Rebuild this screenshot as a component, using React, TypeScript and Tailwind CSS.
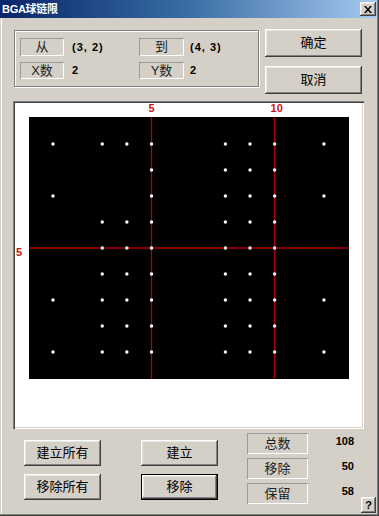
import React from "react";

const btn =
  "flex items-center justify-center bg-[#d4d0c8] text-black shadow-[inset_-1px_-1px_#404040,inset_1px_1px_#ffffff,inset_-2px_-2px_#808080,inset_2px_2px_#e8e6e0]";
const stat =
  "flex items-center justify-center bg-[#d4d0c8] text-[#222] shadow-[inset_1px_1px_#9a9a9a,inset_-1px_-1px_#ffffff]";

const font = { fontFamily: '"Liberation Sans", "Noto Sans CJK SC", sans-serif' };

const COLS = 12;
const ROWS = 9;
const x0 = 38;
const dx = 24.63;
const y0 = 41;
const dy = 26;

// which column indices (1-based) are present in each row
const rows: number[][] = [
  [1, 3, 4, 5, 8, 9, 10, 12],
  [5, 8, 9, 10],
  [1, 5, 8, 9, 10, 12],
  [3, 4, 5, 8, 9, 10],
  [3, 4, 5, 8, 9, 10],
  [3, 4, 5, 8, 9, 10],
  [1, 3, 4, 5, 8, 9, 10, 12],
  [3, 4, 5, 8, 9, 10],
  [1, 3, 4, 5, 8, 9, 10, 12],
];

function Board() {
  const cx = (c: number) => x0 + (c - 1) * dx;
  const cy = (r: number) => y0 + (r - 1) * dy;
  return (
    <svg width="347" height="324" className="block">
      <rect x="0" y="0" width="347" height="324" fill="#ffffff" />
      <rect x="14" y="14" width="320" height="262" fill="#000000" />
      <line x1={cx(5)} y1="14" x2={cx(5)} y2="276" stroke="#b00000" strokeWidth="1.3" />
      <line x1={cx(10)} y1="14" x2={cx(10)} y2="276" stroke="#b00000" strokeWidth="1.3" />
      <line x1="14" y1={cy(5)} x2="334" y2={cy(5)} stroke="#b00000" strokeWidth="1.3" />
      {rows.map((cols, ri) =>
        cols.map((c) => (
          <circle key={`${ri}-${c}`} cx={cx(c)} cy={cy(ri + 1)} r="1.7" fill="#ffffff" />
        ))
      )}
      <text x={cx(5)} y="9" textAnchor="middle" fill="#d01010" fontSize="11" fontWeight="bold" fontFamily="Liberation Sans, sans-serif">5</text>
      <text x={cx(10) + 2} y="9" textAnchor="middle" fill="#d01010" fontSize="11" fontWeight="bold" fontFamily="Liberation Sans, sans-serif">10</text>
      <text x="1" y={cy(5) + 8} textAnchor="start" fill="#d01010" fontSize="11" fontWeight="bold" fontFamily="Liberation Sans, sans-serif">5</text>
    </svg>
  );
}

export default function App() {
  void COLS;
  void ROWS;
  return (
    <div
      style={font}
      className="relative flex flex-col w-[379px] h-[516px] bg-[#d4d0c8] text-[13px] shadow-[inset_-1px_-1px_#404040,inset_-2px_-2px_#808080,inset_1px_1px_#d4d0c8,inset_2px_2px_#ffffff]"
    >
      {/* title bar */}
      <div className="flex items-center h-[18px] mr-[2px] bg-gradient-to-r from-[#0a246a] via-[#3a6ea5] to-[#a6caf0]">
        <span className="pl-[2px] text-white text-[11px] font-bold leading-none tracking-[-0.3px]">BGA球链限</span>
        <div className={`${btn} ml-auto mr-[1px] w-[16px] h-[14px]`}>
          <svg width="8" height="7" viewBox="0 0 8 7">
            <path d="M0 0h2l2 2.5L6 0h2L5 3.5 8 7H6L4 4.5 2 7H0l3-3.5z" fill="#000" />
          </svg>
        </div>
      </div>

      {/* top row */}
      <div className="flex pl-[14px] pt-[11px]">
        <div className="mt-[1px] w-[245px] h-[57px] border border-[#808080] shadow-[1px_1px_#ffffff,inset_1px_1px_#ffffff] flex flex-col gap-[6px] pl-[5px] pt-[7px]">
          <div className="flex items-center h-[18px]">
            <div className={`${stat} w-[44px] h-[18px]`}>从</div>
            <div className="w-[75px] pl-[8px] text-[11px] font-bold tracking-[1px]">(3, 2)</div>
            <div className={`${stat} w-[45px] h-[18px]`}>到</div>
            <div className="pl-[6px] text-[11px] font-bold tracking-[1px]">(4, 3)</div>
          </div>
          <div className="flex items-center h-[17px]">
            <div className={`${stat} w-[44px] h-[17px]`}>X数</div>
            <div className="w-[75px] pl-[8px] text-[11px] font-bold">2</div>
            <div className={`${stat} w-[45px] h-[17px]`}>Y数</div>
            <div className="pl-[6px] text-[11px] font-bold">2</div>
          </div>
        </div>
        <div className="ml-[6px] flex flex-col gap-[9px]">
          <div className={`${btn} w-[97px] h-[28px]`}>确定</div>
          <div className={`${btn} w-[97px] h-[28px]`}>取消</div>
        </div>
      </div>

      {/* canvas */}
      <div className="ml-[13px] mt-[7px] w-[351px] h-[328px] p-[2px] bg-white shadow-[inset_1px_1px_#808080,inset_2px_2px_#404040,inset_-1px_-1px_#ffffff,inset_-2px_-2px_#d4d0c8]">
        <Board />
      </div>

      {/* bottom row */}
      <div className="flex pl-[24px]">
        <div className="mt-[11px] flex flex-col gap-[8px]">
          <div className={`${btn} w-[77px] h-[26px]`}>建立所有</div>
          <div className={`${btn} w-[77px] h-[26px]`}>移除所有</div>
        </div>
        <div className="ml-[40px] mt-[11px] flex flex-col gap-[8px]">
          <div className={`${btn} w-[77px] h-[26px]`}>建立</div>
          <div className="w-[77px] h-[26px] border border-black">
            <div className={`${btn} w-full h-full`}>移除</div>
          </div>
        </div>
        <div className="ml-[29px] mt-[4px] flex flex-col gap-[4px]">
          <div className={`${stat} w-[61px] h-[21px]`}>总数</div>
          <div className={`${stat} w-[61px] h-[21px]`}>移除</div>
          <div className={`${stat} w-[61px] h-[21px]`}>保留</div>
        </div>
        <div className="mt-[2px] flex flex-col gap-[4px]">
          <div className="w-[46px] h-[21px] flex items-center justify-end text-[11px] font-bold">108</div>
          <div className="w-[46px] h-[21px] flex items-center justify-end text-[11px] font-bold">50</div>
          <div className="w-[46px] h-[21px] flex items-center justify-end text-[11px] font-bold">58</div>
        </div>
      </div>

      <div className={`${btn} absolute left-[361px] top-[497px] w-[15px] h-[16px] text-[11px] font-bold leading-none`}>?</div>
    </div>
  );
}
